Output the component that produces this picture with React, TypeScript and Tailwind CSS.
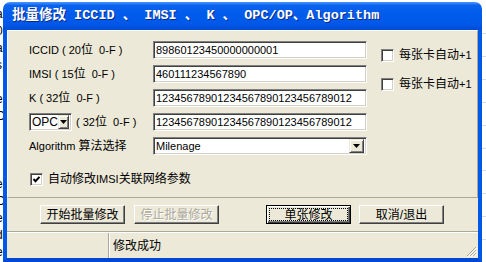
import React from 'react'

const cjk = "text-[12px]"

function Sunken({ children, className = '' }: { children?: React.ReactNode; className?: string }) {
  return (
    <div
      className={`flex h-[18px] items-center border border-t-[#808080] border-l-[#808080] border-b-white border-r-white bg-white shadow-[inset_1px_1px_0_#404040,inset_-1px_-1px_0_#d4d0c8] ${className}`}
    >
      {children}
    </div>
  )
}

function DropArrow() {
  return (
    <div className="mr-[2px] flex h-[14px] w-[15px] items-center justify-center border border-t-[#ece9d8] border-l-[#ece9d8] border-b-[#404040] border-r-[#404040] bg-[#ece9d8] shadow-[inset_1px_1px_0_#fff,inset_-1px_-1px_0_#808080]">
      <svg width="7" height="4" viewBox="0 0 7 4">
        <path d="M0 0h7L3.5 4z" fill="#000" />
      </svg>
    </div>
  )
}

function CheckBox({ checked }: { checked?: boolean }) {
  return (
    <div className="flex h-[13px] w-[13px] shrink-0 items-center justify-center border border-t-[#808080] border-l-[#808080] border-b-white border-r-white bg-white shadow-[inset_1px_1px_0_#404040,inset_-1px_-1px_0_#d4d0c8]">
      {checked && (
        <svg width="9" height="9" viewBox="0 0 9 9">
          <path d="M1.5 4l2 2.2L7.5 1.8" stroke="#000" strokeWidth="2" fill="none" />
        </svg>
      )}
    </div>
  )
}

function Button({ label, focused, disabled }: { label: string; focused?: boolean; disabled?: boolean }) {
  return (
    <div
      className={`flex h-[19px] w-[85px] items-center justify-center bg-[#ece9d8] ${
        focused
          ? 'border border-black shadow-[inset_1px_1px_0_#fff,inset_-1px_-1px_0_#404040,inset_-2px_-2px_0_#808080]'
          : 'border border-t-white border-l-white border-b-[#404040] border-r-[#404040] shadow-[inset_-1px_-1px_0_#808080]'
      }`}
    >
      <div
        className={`flex flex-1 items-center justify-center self-stretch ${
          focused ? 'm-[2px] border border-dotted border-black' : ''
        }`}
      >
        <span
          className={`${cjk} leading-[14px] ${
            disabled ? 'text-[#aca899] [text-shadow:1px_1px_0_#fff]' : 'text-black'
          }`}
        >
          {label}
        </span>
      </div>
    </div>
  )
}

export default function App() {
  const rows = [
    { label: <>ICCID ( 20<span className={cjk}>位</span>&nbsp; 0-F )</>, value: '89860123450000000001' },
    { label: <>IMSI ( 15<span className={cjk}>位</span>&nbsp; 0-F )</>, value: '460111234567890' },
    { label: <>K ( 32<span className={cjk}>位</span>&nbsp; 0-F )</>, value: '12345678901234567890123456789012' },
  ]

  return (
    <div className="flex h-[262px] w-[486px] overflow-hidden bg-white font-['Liberation_Sans','Noto_Sans_CJK_SC',sans-serif] text-[11px] text-black">
      {/* window behind, left edge */}
      <div className="flex w-[3px] flex-col overflow-hidden pt-[6px] font-['Liberation_Sans',sans-serif] text-[12px] leading-[17px] text-black">
        {['a', '0', 'a', 's', 'i', 'e', 'C', 't', 'I', 'r', 'e', 'C', 'e', 'd', 'e', 'e'].map((c, i) => (
          <span key={i} className="-ml-[4px]">{c}</span>
        ))}
      </div>

      {/* dialog */}
      <div className="mt-[2px] flex h-[260px] w-[479px] shrink-0 flex-col">
        <div className="flex h-[28px] items-center rounded-t-[7px] bg-[linear-gradient(180deg,#4a98ff_0%,#0c62ee_12%,#005cec_40%,#0058e8_80%,#004ad6_100%)] pl-[9px]">
          <span className="whitespace-pre font-['Liberation_Mono','Noto_Sans_CJK_SC',monospace] text-[13.5px] font-bold text-white [text-shadow:1px_1px_0_#0a2a8a]">
            批量修改 ICCID 、 IMSI 、 K 、 OPC/OP、Algorithm
          </span>
        </div>

        <div className="flex flex-1 flex-col border-x-[4px] border-b-[4px] border-x-[#0058e8] border-b-[#0048d2] bg-[#ece9d8]">
          {/* main panel */}
          <div className="flex h-[168px] border border-t-white border-l-white border-b-[#aca899] border-r-[#aca899]">
            <div className="flex flex-col pl-[21px] pt-[10px]">
              <div className="grid grid-cols-[124px_214px] gap-y-[6px]">
                {rows.map((r, i) => (
                  <React.Fragment key={i}>
                    <div className="flex h-[18px] items-center">{r.label}</div>
                    <Sunken>
                      <span className="pl-[2px]">{r.value}</span>
                    </Sunken>
                  </React.Fragment>
                ))}

                <div className="flex h-[18px] items-center">
                  <div className="flex h-[18px] w-[43px] items-center justify-between border border-t-[#808080] border-l-[#808080] border-b-white border-r-white bg-white shadow-[inset_1px_1px_0_#404040,inset_-1px_-1px_0_#d4d0c8]">
                    <span className="pl-[2px] text-[12px]">OPC</span>
                    <DropArrow />
                  </div>
                  <span className="ml-[4px]">
                    ( 32<span className={cjk}>位</span>&nbsp; 0-F )
                  </span>
                </div>
                <Sunken>
                  <span className="pl-[2px]">12345678901234567890123456789012</span>
                </Sunken>

                <div className="flex h-[18px] items-center">
                  Algorithm <span className={`${cjk} ml-[3px]`}>算法选择</span>
                </div>
                <Sunken className="justify-between">
                  <span className="pl-[2px]">Milenage</span>
                  <DropArrow />
                </Sunken>
              </div>

              <div className="ml-px mt-[15px] flex items-center gap-[5px]">
                <CheckBox checked />
                <span>
                  <span className={cjk}>自动修改</span>IMSI<span className={cjk}>关联网络参数</span>
                </span>
              </div>
            </div>

            <div className="ml-[14px] flex flex-col gap-[16px] pt-[18px]">
              {[0, 1].map((i) => (
                <div key={i} className="flex h-[13px] items-center gap-[5px]">
                  <CheckBox />
                  <span className="leading-[13px]">
                    <span className={cjk}>每张卡自动</span>+1
                  </span>
                </div>
              ))}
            </div>
          </div>

          {/* buttons */}
          <div className="flex h-[34px] items-center border-b border-b-[#aca899] pl-[33px]">
            <Button label="开始批量修改" />
            <div className="ml-[9px]">
              <Button label="停止批量修改" disabled />
            </div>
            <div className="ml-[47px]">
              <Button label="单张修改" focused />
            </div>
            <div className="ml-[8px]">
              <Button label="取消/退出" />
            </div>
          </div>

          {/* status bar */}
          <div className="flex flex-1 border-t border-t-white">
            <div className="w-[102px] border-r border-r-[#aca899]" />
            <div className="flex flex-1 items-center border-l border-l-white pl-[3px]">
              <span className={cjk}>修改成功</span>
            </div>
            <div className="flex items-end pb-[1px] pr-[1px]">
              <svg width="11" height="11" viewBox="0 0 11 11">
                <path d="M10 1L1 10M10 4L4 10M10 7L7 10" stroke="#aca899" strokeWidth="1" />
                <path d="M11 2L2 11M11 5L5 11M11 8L8 11" stroke="#fff" strokeWidth="1" />
              </svg>
            </div>
          </div>
        </div>
      </div>

      {/* list behind, right edge */}
      <div className="flex flex-1 flex-col pt-[33px]">
        {[0, 1, 2, 3, 4, 5, 6, 7, 8, 9].map((i) => (
          <div key={i} className="h-[25px] border-t border-t-[#d4def0]" />
        ))}
      </div>
    </div>
  )
}
